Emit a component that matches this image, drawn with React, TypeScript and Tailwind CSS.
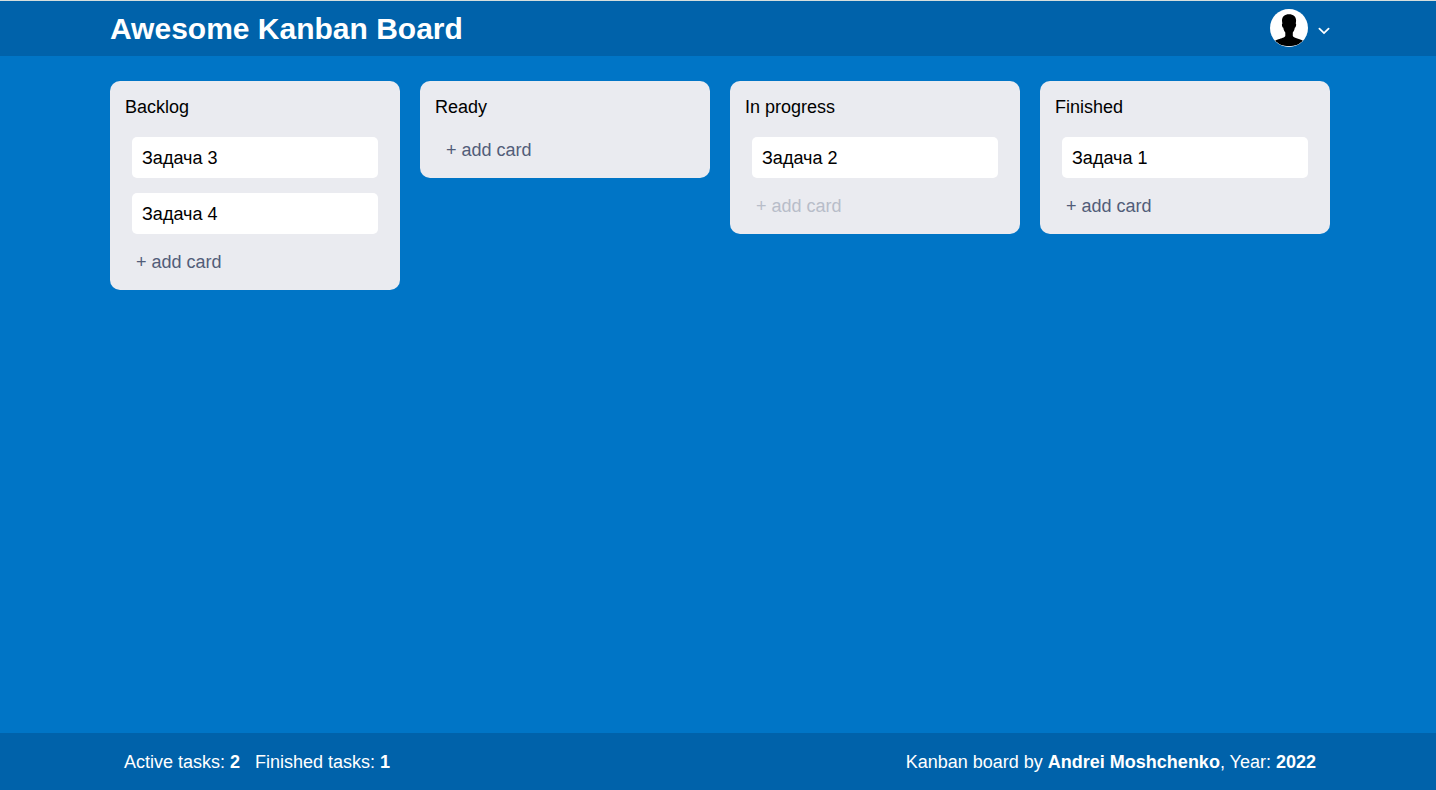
type Column = {
  title: string;
  tasks: string[];
  locked?: boolean;
};

const columns: Column[] = [
  { title: "Backlog", tasks: ["Задача 3", "Задача 4"] },
  { title: "Ready", tasks: [] },
  { title: "In progress", tasks: ["Задача 2"], locked: true },
  { title: "Finished", tasks: ["Задача 1"] },
];

function Avatar() {
  return (
    <svg viewBox="0 0 38 38" className="size-[38px]" aria-hidden="true">
      <defs>
        <clipPath id="avatar-circle">
          <circle cx="19" cy="19" r="18.6" />
        </clipPath>
      </defs>
      <circle cx="19" cy="19" r="19" fill="#fff" />
      <path
        clipPath="url(#avatar-circle)"
        fill="#000"
        d="M19 5.3C14.6 5.3 12 7.6 12 11.6C12 12.7 12.2 13.7 12.4 14.5C11.5 14.8 12 18.2 13.3 18.8C13.6 20.8 14.3 22.3 15.3 23.5V27C14.8 28.6 11.5 29.2 8.4 30.3C6.4 31 5.2 31.6 4 32.6C7.5 36 13.2 37.2 19 37.2S30.5 36 34 32.6C32.8 31.6 31.6 31 29.6 30.3C26.5 29.2 23.3 28.6 22.8 27V23.5C23.8 22.3 24.5 20.8 24.8 18.8C26.1 18.2 26.6 14.8 25.7 14.5C25.9 13.7 26.1 12.7 26.1 11.6C26.1 7.6 23.4 5.3 19 5.3Z"
      />
    </svg>
  );
}

function BoardColumn({ title, tasks, locked }: Column) {
  return (
    <section className="rounded-[10px] bg-[#eaebf0] px-[22px] pt-[14px] pb-[15px]">
      <h2 className="-ml-[7px] mb-[18px] leading-6">{title}</h2>
      <div className="flex flex-col gap-[15px]">
        {tasks.map((task) => (
          <a
            key={task}
            href="#task"
            className="rounded-[5px] bg-white px-[10px] pt-[9px] pb-2 leading-6"
          >
            {task}
          </a>
        ))}
        <button
          type="button"
          disabled={locked}
          className="self-start px-1 leading-[26px] text-[#525d79] disabled:text-[#b8bdc9]"
        >
          + add card
        </button>
      </div>
    </section>
  );
}

export default function App() {
  return (
    <div className="flex min-h-screen flex-col bg-[#0075c6] font-['Liberation_Sans',Arial,sans-serif] text-[18px] text-black">
      <header className="flex h-14 items-center justify-between border-t border-[#d5dedd] bg-[#0062aa] pr-[106px] pl-[110px] text-white">
        <h1 className="text-[30px] leading-9 font-bold">Awesome Kanban Board</h1>
        <button type="button" aria-label="User menu" className="flex items-center gap-[10px] pb-[2px]">
          <Avatar />
          <svg
            viewBox="0 0 12 8"
            className="mt-[6px] h-2 w-3"
            fill="none"
            stroke="currentColor"
            strokeWidth="1.8"
            strokeLinecap="round"
            aria-hidden="true"
          >
            <path d="M1.4 1.6L6 6.1L10.6 1.6" />
          </svg>
        </button>
      </header>

      <main className="grid flex-1 grid-cols-4 items-start gap-5 pt-[25px] pr-[106px] pb-6 pl-[110px]">
        {columns.map((column) => (
          <BoardColumn key={column.title} {...column} />
        ))}
      </main>

      <footer className="flex items-center justify-between bg-[#0062aa] pt-[17px] pr-[120px] pb-4 pl-[124px] leading-6 text-white">
        <div className="flex gap-[15px]">
          <p>
            Active tasks: <b>2</b>
          </p>
          <p>
            Finished tasks: <b>1</b>
          </p>
        </div>
        <p>
          Kanban board by <b>Andrei Moshchenko</b>, Year: <b>2022</b>
        </p>
      </footer>
    </div>
  );
}
